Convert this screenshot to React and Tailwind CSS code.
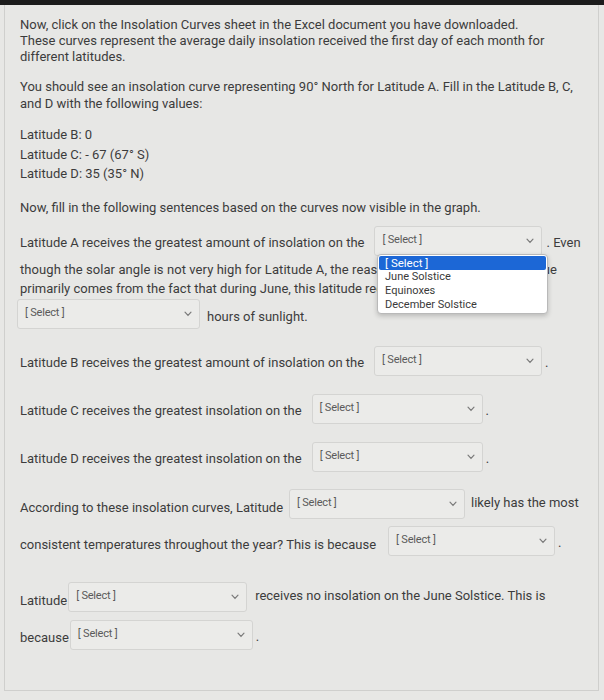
import React from "react";

function Chevron() {
  return (
    <svg width="8" height="6" viewBox="0 0 8 6" className="shrink-0">
      <path d="M1 1.2 L4 4.4 L7 1.2" fill="none" stroke="#7a7a7a" strokeWidth="1.2" strokeLinecap="round" />
    </svg>
  );
}

function Dropdown({ className = "" }) {
  return (
    <div
      className={`h-[30px] shrink-0 flex items-center justify-between pl-[7px] pr-[7px] bg-[#ebebe9] border border-[#d4d4d2] rounded-[3px] ${className}`}
    >
      <span className="text-[11px] text-[#5a5a5a] tracking-[-0.2px]">[ Select ]</span>
      <Chevron />
    </div>
  );
}

export default function App() {
  return (
    <div className="w-[604px] h-[700px] bg-[#e7e7e5] overflow-hidden font-['Roboto',sans-serif] text-[#3c3c3c] text-[13px]">
      <div className="h-[5px] bg-[#1c1c1c]" />
      <div className="ml-[4px] w-[595px] h-[686px] border-l border-r border-b border-[#cfcfcd] pl-[15px]">
        <div className="pt-[12px] leading-[16px]">
          <p>Now, click on the Insolation Curves sheet in the Excel document you have downloaded.</p>
          <p>These curves represent the average daily insolation received the first day of each month for</p>
          <p>different latitudes.</p>
        </div>
        <div className="mt-[13px] leading-[17px]">
          <p>You should see an insolation curve representing 90° North for Latitude A. Fill in the Latitude B, C,</p>
          <p>and D with the following values:</p>
        </div>
        <div className="mt-[13px] leading-[19.5px]">
          <p>Latitude B: 0</p>
          <p>Latitude C: - 67 (67° S)</p>
          <p>Latitude D: 35 (35° N)</p>
        </div>
        <p className="mt-[15px] leading-[17px]">Now, fill in the following sentences based on the curves now visible in the graph.</p>

        {/* Latitude A */}
        <div className="mt-[10px] flex items-center relative">
          <span className="pt-[4px] whitespace-nowrap">Latitude A receives the greatest amount of insolation on the</span>
          <Dropdown className="ml-[10px] w-[168px]" />
          <span className="pt-[4px] ml-[4px] whitespace-nowrap">. Even</span>
          <div className="absolute left-[357px] top-[28px] w-[171px] bg-white border border-[#b9b9b9] rounded-[4px] shadow-[0_2px_5px_rgba(0,0,0,0.2)] py-[1px] text-[11px] leading-[14px] text-[#3a3a3a] z-10">
            <div className="mx-[1px] px-[6px] bg-[#1c67d6] text-white text-[11.5px] rounded-[2px]">[ Select ]</div>
            <div className="px-[7px]">June Solstice</div>
            <div className="px-[7px]">Equinoxes</div>
            <div className="px-[7px]">December Solstice</div>
          </div>
        </div>
        <div className="mt-[4px] leading-[19px] whitespace-nowrap">
          <p className="tracking-[0.07px]">though the solar angle is not very high for Latitude A, the reason for the high insolation value</p>
          <p>primarily comes from the fact that during June, this latitude receives</p>
        </div>
        <div className="mt-[1px] -ml-[3px] flex items-center">
          <Dropdown className="w-[183px]" />
          <span className="pt-[7px] ml-[7px]">hours of sunlight.</span>
        </div>

        {/* Latitude B */}
        <div className="mt-[17px] flex items-center">
          <span className="pt-[5px] whitespace-nowrap">Latitude B receives the greatest amount of insolation on the</span>
          <Dropdown className="ml-[10px] w-[168px]" />
          <span className="pt-[5px] ml-[3px]">.</span>
        </div>

        {/* Latitude C */}
        <div className="mt-[18px] flex items-center">
          <span className="pt-[5px] whitespace-nowrap">Latitude C receives the greatest insolation on the</span>
          <Dropdown className="ml-[10px] w-[171px]" />
          <span className="pt-[5px] ml-[3px]">.</span>
        </div>

        {/* Latitude D */}
        <div className="mt-[18px] flex items-center">
          <span className="pt-[5px] whitespace-nowrap">Latitude D receives the greatest insolation on the</span>
          <Dropdown className="ml-[10px] w-[171px]" />
          <span className="pt-[5px] ml-[3px]">.</span>
        </div>

        {/* Consistency */}
        <div className="mt-[17px] flex items-center">
          <span className="pt-[8px] whitespace-nowrap">According to these insolation curves, Latitude</span>
          <Dropdown className="ml-[6px] w-[176px]" />
          <span className="ml-[6px] -mt-[2px] whitespace-nowrap">likely has the most</span>
        </div>
        <div className="mt-[7px] flex items-center">
          <span className="pt-[8px] whitespace-nowrap">consistent temperatures throughout the year? This is because</span>
          <Dropdown className="ml-[12px] w-[167px]" />
          <span className="pt-[5px] ml-[3px]">.</span>
        </div>

        {/* No insolation */}
        <div className="mt-[26px] flex items-center">
          <span className="pt-[9px] whitespace-nowrap">Latitude</span>
          <Dropdown className="ml-[1px] w-[179px]" />
          <span className="ml-[8px] -mt-[2px] whitespace-nowrap">receives no insolation on the June Solstice. This is</span>
        </div>
        <div className="mt-[8px] flex items-center">
          <span className="pt-[7px] whitespace-nowrap">because</span>
          <Dropdown className="ml-[1px] w-[183px]" />
          <span className="pt-[5px] ml-[3px]">.</span>
        </div>
      </div>
    </div>
  );
}
